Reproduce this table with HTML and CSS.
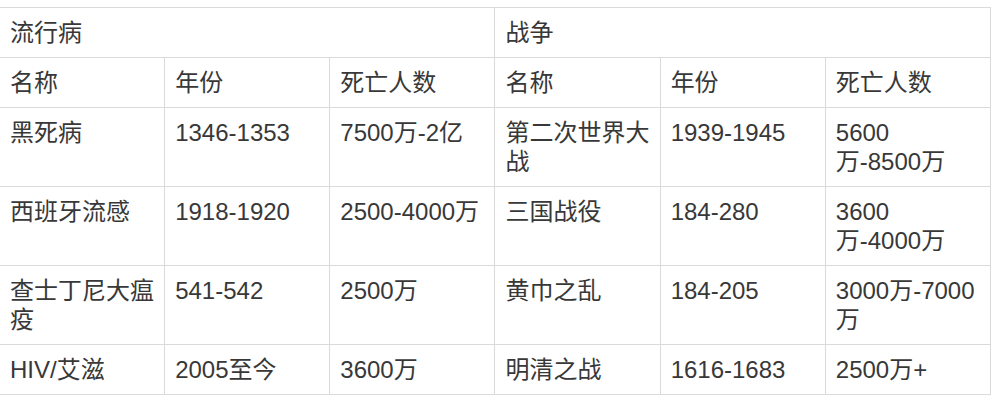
FILE: index.html
```html
<!DOCTYPE html>
<html lang="zh">
<head>
<meta charset="utf-8">
<title>流行病与战争</title>
<link rel="stylesheet" href="styles.css">
</head>
<body>
<table class="data">
  <colgroup>
    <col class="c"><col class="c"><col class="c"><col class="c"><col class="c"><col class="c">
  </colgroup>
  <tbody>
    <tr><td colspan="3">流行病</td><td colspan="3">战争</td></tr>
    <tr><td>名称</td><td>年份</td><td>死亡人数</td><td>名称</td><td>年份</td><td>死亡人数</td></tr>
    <tr><td>黑死病</td><td>1346-1353</td><td>7500万-2亿</td><td>第二次世界大<br>战</td><td>1939-1945</td><td>5600<br>万-8500万</td></tr>
    <tr><td>西班牙流感</td><td>1918-1920</td><td>2500-4000万</td><td>三国战役</td><td>184-280</td><td>3600<br>万-4000万</td></tr>
    <tr><td>查士丁尼大瘟<br>疫</td><td>541-542</td><td>2500万</td><td>黄巾之乱</td><td>184-205</td><td>3000万-7000<br>万</td></tr>
    <tr><td>HIV/艾滋</td><td>2005至今</td><td>3600万</td><td>明清之战</td><td>1616-1683</td><td>2500万+</td></tr>
  </tbody>
</table>
</body>
</html>
```

FILE: styles.css
```css
html, body {
  margin: 0;
  padding: 0;
  background: #ffffff;
}
body {
  overflow: hidden;
}
.data {
  margin: 7px 0 0 -1px;
  width: 992px;
  table-layout: fixed;
  border-collapse: collapse;
  font-family: "Liberation Sans", "Noto Sans CJK SC", sans-serif;
  font-size: 24px;
  line-height: 29px;
  color: #383838;
}
.data .c {
  width: 16.666%;
}
.data td {
  border: 1px solid #dadada;
  padding: 10px 9px 10px 10px;
  vertical-align: top;
  text-align: left;
  white-space: nowrap;
}
```
